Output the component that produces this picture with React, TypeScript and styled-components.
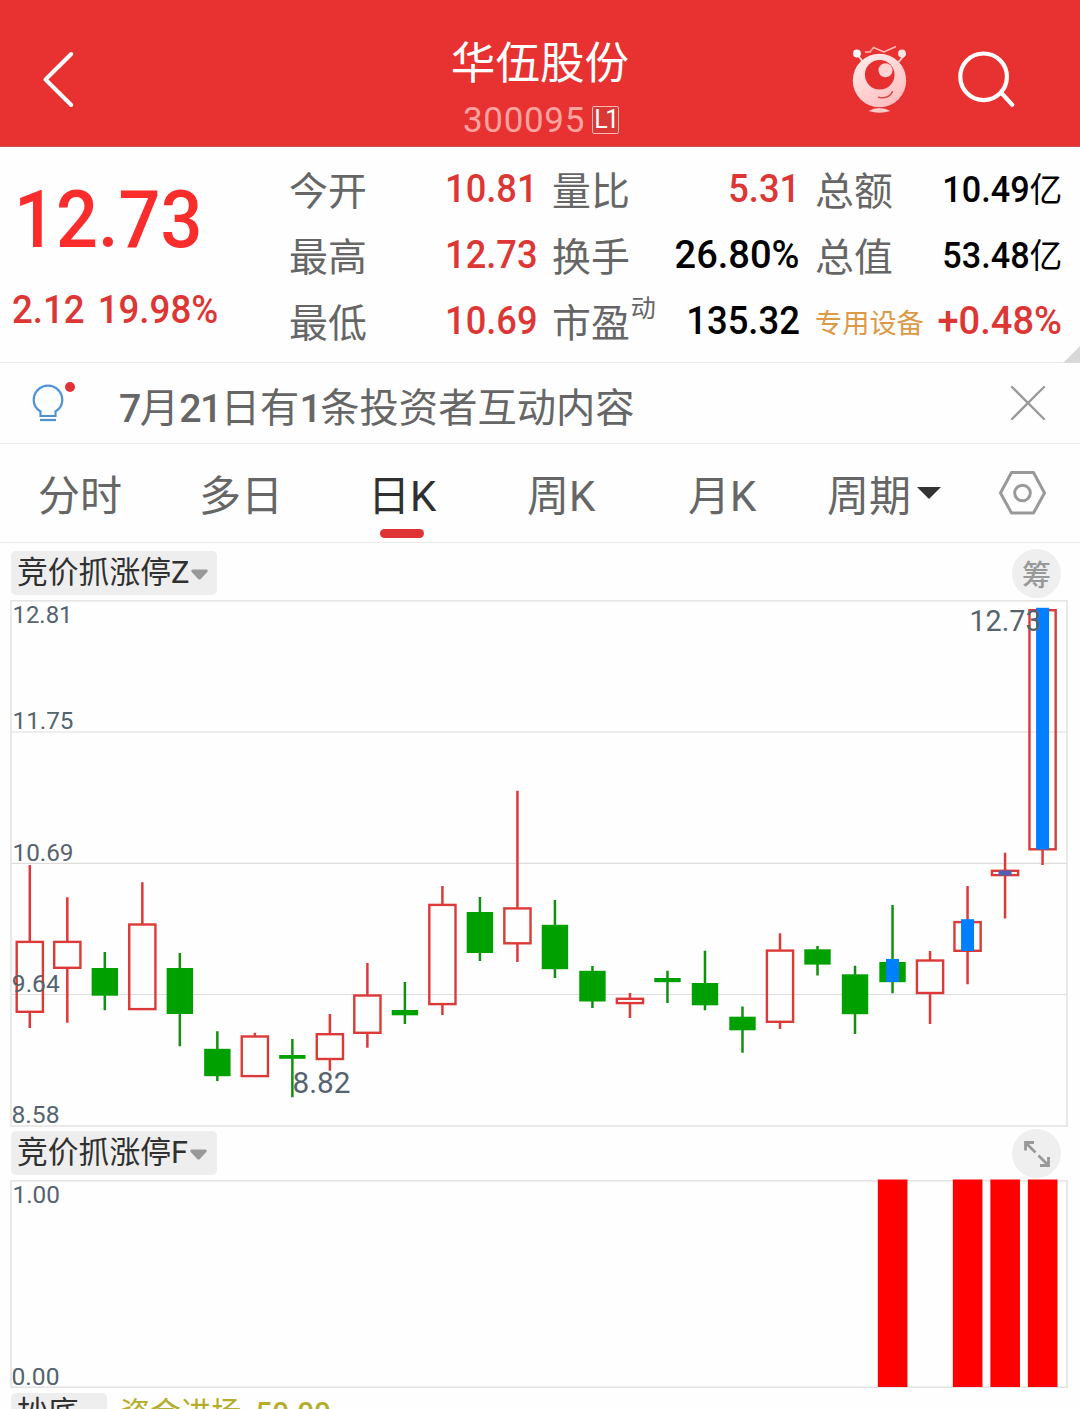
import React from 'react';
import styled, { createGlobalStyle } from 'styled-components';

const cjk = '"Noto Sans CJK SC", sans-serif';
const numeric = `Roboto, ${cjk}`;

const GlobalStyle = createGlobalStyle`
  body { margin: 0; background: #fefefe; }
  * { box-sizing: border-box; }
`;

const Page = styled.main`
  width: 1080px;
  height: 1409px;
  overflow: hidden;
  display: flex;
  flex-direction: column;
  background: #fefefe;
  color: #666;
  font-family: ${cjk};
  white-space: nowrap;
`;

const Header = styled.header`
  flex: none;
  height: 147px;
  display: grid;
  grid-template-columns: 340px 400px 340px;
  background: #e83131;
  border-bottom: 1px solid #c9504c;
`;

const BackButton = styled.div`
  padding: 50px 0 0 40px;
`;

const TitleBlock = styled.div`
  display: flex;
  flex-direction: column;
  align-items: center;
  padding-top: 30px;
`;

const StockName = styled.h1`
  margin: 0;
  height: 64px;
  line-height: 60px;
  font-size: 44.6px;
  font-weight: 400;
  color: #fff;
`;

const CodeRow = styled.div`
  display: flex;
  align-items: center;
  gap: 7px;
  height: 54px;
  padding-left: 2px;
`;

const Code = styled.span`
  font: 400 35px/54px ${numeric};
  letter-spacing: 0.65px;
  color: #ffa3a0;
`;

const LevelTag = styled.span`
  width: 27px;
  height: 28px;
  border: 1px solid #ffb5b2;
  border-radius: 2px;
  background: #d93836;
  color: #fff;
  font: 400 25px/26px ${numeric};
  letter-spacing: -2.5px;
  text-align: center;
  margin-top: -2px;
`;

const HeaderActions = styled.div`
  display: flex;
  gap: 45px;
  padding: 40px 0 0 108px;
`;

const Quote = styled.section`
  flex: none;
  height: 216px;
  display: flex;
  border-bottom: 1.5px solid #ebebeb;
  position: relative;
`;

const PriceBlock = styled.div`
  width: 289px;
`;

const Num = styled.span<{ $size: number; $scale?: number; $color?: string; $origin?: string; $weight?: number }>`
  display: inline-block;
  font-family: ${numeric};
  font-weight: ${p => p.$weight ?? 500};
  font-size: ${p => p.$size}px;
  color: ${p => p.$color ?? '#000'};
  transform: scaleX(${p => p.$scale ?? 1});
  transform-origin: ${p => p.$origin ?? 'right'} center;
`;

const Amount = styled(Num)`
  margin-top: -2px;
`;

const Unit = styled.span`
  font-family: ${cjk};
  font-size: 34.5px;
  font-weight: 400;
`;

const Price = styled.div`
  padding: 24px 0 0 14px;
  height: 120px;
  line-height: 97px;
`;

const Change = styled.div`
  padding-left: 12px;
  height: 86px;
  line-height: 87px;
  word-spacing: 4px;
`;

const Stats = styled.div`
  display: grid;
  grid-template-columns: 248px 248px 247px;
  grid-template-rows: repeat(3, 66px);
  column-gap: 15px;
  padding-top: 9px;
`;

const Stat = styled.div`
  display: flex;
  justify-content: space-between;
  line-height: 66px;
`;

const Label = styled.span<{ $sector?: boolean }>`
  margin-top: ${p => (p.$sector ? 0 : -1)}px;
  font-size: ${p => (p.$sector ? 27.2 : 38.9)}px;
  color: ${p => (p.$sector ? '#dc9a48' : '#666')};
`;

const Sup = styled.sup`
  font-size: 25px;
  line-height: 0;
  vertical-align: 20px;
  margin-left: 1px;
`;

const Corner = styled.i`
  position: absolute;
  right: 0;
  bottom: -1px;
  width: 17px;
  height: 17px;
  background: #d8d8d8;
  clip-path: polygon(100% 0, 100% 100%, 0 100%);
`;

const Notice = styled.section`
  flex: none;
  height: 81px;
  display: flex;
  align-items: flex-start;
  border-bottom: 1.5px solid #ebebeb;
  padding: 0 30px 0 28px;
`;

const NoticeText = styled.p`
  flex: 1;
  margin: 0;
  padding-left: 39px;
  line-height: 84px;
  font-size: 39.3px;
`;

const NoticeDigits = styled.span`
  font-family: ${numeric};
  font-weight: 500;
  letter-spacing: -1.5px;
`;

const BulbSlot = styled.div`
  width: 52px;
  padding-top: 14px;
`;

const CloseSlot = styled.div`
  padding-top: 20px;
`;

const Tabs = styled.nav`
  flex: none;
  height: 99px;
  display: flex;
  border-bottom: 1.5px solid #ebebeb;
  padding-left: 38px;
`;

const Tab = styled.div<{ $active?: boolean; $width: number }>`
  width: ${p => p.$width}px;
  display: flex;
  font-family: ${numeric};
  font-size: 42px;
  line-height: 105px;
  color: ${p => (p.$active ? '#303030' : '#666')};
  position: relative;
  &::after {
    content: '';
    display: ${p => (p.$active ? 'block' : 'none')};
    position: absolute;
    left: 12px;
    top: 85px;
    width: 44px;
    height: 9px;
    border-radius: 5px;
    background: #e03335;
  }
`;

const TabCaret = styled.i`
  width: 24px;
  height: 12px;
  margin: 43px 0 0 6px;
  background: #333;
  clip-path: polygon(0 0, 100% 0, 50% 100%);
`;

const GearSlot = styled.div`
  padding-top: 24px;
`;

const PanelHead = styled.div<{ $height: number; $top: number }>`
  flex: none;
  height: ${p => p.$height}px;
  padding: ${p => p.$top}px 19px 0 11px;
  display: flex;
  justify-content: space-between;
  align-items: flex-start;
`;

const Picker = styled.div<{ $width?: number; $line?: number }>`
  display: flex;
  width: ${p => p.$width ?? 206}px;
  height: 44px;
  border-radius: 5px;
  background: #eee;
  padding-left: 6px;
  font-family: ${numeric};
  font-size: 30.8px;
  line-height: ${p => p.$line ?? 44}px;
  color: #303030;
`;

const PickerCaret = styled.svg`
  margin: 18px 0 0 2px;
`;

const RoundButton = styled.div<{ $shift: number }>`
  width: 49px;
  height: 49px;
  margin-top: ${p => p.$shift}px;
  border-radius: 50%;
  background: #efefef;
  color: #999;
  font-size: 29px;
  font-weight: 500;
  line-height: 49px;
  display: flex;
  align-items: center;
  justify-content: center;
`;

const Plot = styled.svg`
  display: block;
  flex: none;
`;

const AxisText = styled.text`
  font-family: ${numeric};
  font-weight: 450;
  fill: #55636e;
`;

const IndicatorHead = styled.div`
  display: flex;
  gap: 13px;
  height: 16px;
  overflow: hidden;
`;

const Indicator = styled.div`
  display: flex;
  gap: 14px;
  font: 400 30.4px/41px ${numeric};
  color: #b5ae2c;
`;

const IndicatorValue = styled.span`
  font-weight: 500;
  font-size: 29.5px;
`;

type Candle = [up: boolean, high: number, top: number, bottom: number, low: number, mark?: [number, number]];

const candles: Candle[] = [
  [true, 865, 940.7, 1013, 1028],
  [true, 897.3, 940.7, 969, 1022.7],
  [false, 952, 968, 995.7, 1010.3],
  [true, 882.3, 923.3, 1010.3, 1010],
  [false, 953, 968, 1014, 1046.3],
  [false, 1031.3, 1048.8, 1076.2, 1080.9],
  [true, 1032.7, 1035.3, 1077.3, 1077],
  [false, 1039, 1055, 1058.8, 1097.3],
  [true, 1014, 1033, 1060.2, 1070.7],
  [true, 963, 994.3, 1034, 1047.7],
  [false, 982, 1010, 1015.3, 1024],
  [true, 886, 903.7, 1005.3, 1015],
  [false, 897, 912, 953, 960.9],
  [true, 790.7, 907.2, 944.5, 962],
  [false, 900, 924.8, 969.2, 978],
  [false, 965.9, 970.8, 1001.5, 1007.9],
  [true, 993, 997.6, 1004.3, 1017.9],
  [false, 970.7, 978, 982.2, 1002.9],
  [false, 950.7, 983, 1005.3, 1010.3],
  [false, 1006.6, 1016.7, 1030.3, 1052.7],
  [true, 933.3, 949.4, 1023, 1029],
  [false, 946, 949.3, 964.6, 975.5],
  [false, 965.7, 974.3, 1014.2, 1034],
  [false, 905, 962, 982.2, 993.2, [959, 982]],
  [true, 951, 959.3, 994.2, 1023.9],
  [true, 886, 920.9, 952, 984.2, [919.2, 951]],
  [true, 852.7, 869.6, 876.3, 918.5, [870.5, 875.5]],
  [true, 608.5, 609, 850.5, 865, [607.8, 849.5]],
];

const RED = '#dc3a38';
const GREEN = '#00a000';
const FRAME = '#e4e4e4';

function CandleShape({ index, data }: { index: number; data: Candle }) {
  const [up, high, top, bottom, low, mark] = data;
  const x = 29.8 + index * 37.51;
  return (
    <g>
      <path
        d={`M${x} ${high}V${up ? top + 1 : low}M${x} ${bottom - 1}V${Math.max(low, bottom - 1)}`}
        stroke={up ? RED : '#128f12'}
        strokeWidth="2.5"
      />
      {up ? (
        <rect x={x - 13.1} y={top + 1.2} width="26.2" height={bottom - top - 2.4} fill="none" stroke={RED} strokeWidth="2.4" />
      ) : (
        <rect x={x - 13.2} y={top} width="26.4" height={bottom - top} fill={GREEN} />
      )}
      {mark && (
        <rect x={x - 6.5} y={mark[0]} width="13" height={mark[1] - mark[0]} fill={index === 26 ? '#5260b4' : '#007fff'} />
      )}
    </g>
  );
}

const priceLabels: [string, number, number, number][] = [
  ['12.81', 12.5, 622.8, 60],
  ['11.75', 12.5, 728.6, 61],
  ['10.69', 12.5, 860.6, 61],
  ['9.64', 11.8, 991.8, 48],
  ['8.58', 11.5, 1122.6, 48],
];

function Caret() {
  return (
    <PickerCaret width="17" height="12" viewBox="0 0 17 12">
      <path d="M1.500 0.500h14q2 .4 .8 2.500L9.800 10q-1.300 1.200-2.600 0L.7 3Q-.5 .9 1.500 .5z" fill="#999" />
    </PickerCaret>
  );
}

export default function App() {
  return (
    <Page>
      <GlobalStyle />
      <Header>
        <BackButton>
          <svg width="36" height="60" viewBox="0 0 36 60" fill="none" stroke="#fff" strokeWidth="4" strokeLinecap="round" strokeLinejoin="round">
            <path d="M31.2 4L5.5 29.5 31.2 55" />
          </svg>
        </BackButton>
        <TitleBlock>
          <StockName>华伍股份</StockName>
          <CodeRow>
            <Code>300095</Code>
            <LevelTag>L1</LevelTag>
          </CodeRow>
        </TitleBlock>
        <HeaderActions>
          <svg width="62" height="76" viewBox="0 0 62 76" fill="none">
            <defs>
              <linearGradient id="mascot" x1="0" y1="0" x2="0.6" y2="1">
                <stop offset="0" stopColor="#fff0ef" />
                <stop offset="1" stopColor="#ffbfc0" />
              </linearGradient>
            </defs>
            <path d="M9 14l6 8M57.500 14l-7 8" stroke="#ffdedd" strokeWidth="1.8" />
            <circle cx="9" cy="13.500" r="3.900" fill="#fff" />
            <circle cx="54" cy="13.500" r="3.900" fill="#ffe6e5" />
            <path d="M17 12h5l3.500-4.500L36 12l12-5.500" stroke="#ffb9b7" strokeWidth="1.5" />
            <circle cx="31.500" cy="40.500" r="26.700" fill="url(#mascot)" />
            <circle cx="31.700" cy="34.800" r="14.800" fill="#e63030" />
            <circle cx="37.500" cy="30.200" r="7" fill="#ffd3d2" />
            <path d="M30.500 57.200q10 2.500 14-5.500" stroke="#d84a4a" strokeWidth="1.5" strokeLinecap="round" />
            <path d="M20.500 71q11-6 22 0-11 3.500-22 0z" fill="#ffc9c8" />
          </svg>
          <svg width="66" height="72" viewBox="0 0 66 72" fill="none" stroke="#fff" strokeWidth="4.200" strokeLinecap="round">
            <circle cx="28.600" cy="36.800" r="23.300" />
            <path d="M46 52.500L57.300 64.800" />
          </svg>
        </HeaderActions>
      </Header>

      <Quote>
        <PriceBlock>
          <Price>
            <Num $size={80.5} $scale={0.918} $color="#fa2c2c" $origin="left">12.73</Num>
          </Price>
          <Change>
            <Num $size={38} $scale={0.965} $color="#dd3735" $origin="left">2.12 19.98%</Num>
          </Change>
        </PriceBlock>
        <Stats>
          <Stat><Label>今开</Label><Num $size={39.4} $scale={0.92} $color="#dd3735">10.81</Num></Stat>
          <Stat><Label>量比</Label><Num $size={39.4} $scale={0.92} $color="#dd3735">5.31</Num></Stat>
          <Stat><Label>总额</Label><Amount $size={36} $scale={0.95}>10.49<Unit>亿</Unit></Amount></Stat>
          <Stat><Label>最高</Label><Num $size={39.4} $scale={0.92} $color="#dd3735">12.73</Num></Stat>
          <Stat><Label>换手</Label><Num $size={39.4} $scale={0.965}>26.80%</Num></Stat>
          <Stat><Label>总值</Label><Amount $size={36} $scale={0.95}>53.48<Unit>亿</Unit></Amount></Stat>
          <Stat><Label>最低</Label><Num $size={39.4} $scale={0.92} $color="#dd3735">10.69</Num></Stat>
          <Stat><Label>市盈<Sup>动</Sup></Label><Num $size={39.4} $scale={0.925}>135.32</Num></Stat>
          <Stat><Label $sector>专用设备</Label><Num $size={39.4} $scale={0.965} $color="#dd3735">+0.48%</Num></Stat>
        </Stats>
        <Corner />
      </Quote>

      <Notice>
        <BulbSlot>
          <svg width="52" height="50" viewBox="0 0 52 50" fill="none" stroke="#4f93d6" strokeWidth="2.200">
            <path d="M12.500 39v-4.500C7.500 31.500 5.700 27.500 5.700 23a14.300 14.300 0 0 1 28.600 0c0 4.500-1.800 8.500-6.800 11.500v4.500z" />
            <path d="M12 43h16" />
            <circle cx="42" cy="10" r="5" fill="#e03335" stroke="none" />
          </svg>
        </BulbSlot>
        <NoticeText>
          <NoticeDigits>7</NoticeDigits>月<NoticeDigits>21</NoticeDigits>日有<NoticeDigits>1</NoticeDigits>条投资者互动内容
        </NoticeText>
        <CloseSlot>
          <svg width="42" height="42" viewBox="0 0 42 42" stroke="#999" strokeWidth="2.300" strokeLinecap="round">
            <path d="M4 4l32 32M36 4l-32 32" />
          </svg>
        </CloseSlot>
      </Notice>

      <Tabs>
        <Tab $width={161}>分时</Tab>
        <Tab $width={169}>多日</Tab>
        <Tab $width={159} $active>日K</Tab>
        <Tab $width={161}>周K</Tab>
        <Tab $width={139}>月K</Tab>
        <Tab $width={171}>周期<TabCaret /></Tab>
        <GearSlot>
          <svg width="50" height="48" viewBox="0 0 50 48" fill="none" stroke="#999" strokeWidth="3" strokeLinejoin="round">
            <path d="M13.500 4.500h22L46.500 25l-11 20h-22L2.500 25z" />
            <circle cx="24.500" cy="25" r="7.800" />
          </svg>
        </GearSlot>
      </Tabs>

      <PanelHead $height={56} $top={8}>
        <Picker>竞价抓涨停Z<Caret /></Picker>
        <RoundButton $shift={-2}>筹</RoundButton>
      </PanelHead>

      <Plot width="1080" height="529" viewBox="0 599 1080 529">
        <path d="M11 732H1067M11 863.400H1067M11 994.500H1067" stroke="#dedede" strokeWidth="1.200" />
        <rect x="11" y="600.800" width="1056" height="525.200" fill="none" stroke={FRAME} strokeWidth="1.600" />
        {candles.map((c, i) => <CandleShape key={i} index={i} data={c} />)}
        {priceLabels.map(([label, x, y, w]) => (
          <AxisText key={label} x={x} y={y} fontSize="24.600" textLength={w} lengthAdjust="spacingAndGlyphs">{label}</AxisText>
        ))}
        <AxisText x="292.500" y="1092.500" fontSize="29" textLength="58" lengthAdjust="spacingAndGlyphs">8.82</AxisText>
        <AxisText x="969.500" y="630.600" fontSize="29" textLength="72" lengthAdjust="spacingAndGlyphs">12.73</AxisText>
      </Plot>

      <PanelHead $height={51} $top={3}>
        <Picker>竞价抓涨停F<Caret /></Picker>
        <RoundButton $shift={-2}>
          <svg width="30" height="30" viewBox="0 0 30 30" fill="none" stroke="#999" strokeWidth="2.800">
            <path d="M3.500 11.500V3.500H12M4 4l9.500 9.500M26.500 18v8.500H18M26 26l-9.500-9.500" />
          </svg>
        </RoundButton>
      </PanelHead>

      <Plot width="1080" height="214" viewBox="0 1179 1080 214">
        <rect x="11" y="1180.800" width="1056" height="206.400" fill="none" stroke={FRAME} strokeWidth="1.600" />
        {[23, 25, 26, 27].map(i => (
          <rect key={i} x={15.1 + i * 37.51} y="1179.500" width="29.600" height="207.500" fill="#ff0000" />
        ))}
        <AxisText x="12.500" y="1202.600" fontSize="24.600" textLength="47.500" lengthAdjust="spacingAndGlyphs">1.00</AxisText>
        <AxisText x="11.500" y="1384.600" fontSize="24.600" textLength="48" lengthAdjust="spacingAndGlyphs">0.00</AxisText>
      </Plot>

      <PanelHead $height={16} $top={0}>
        <IndicatorHead>
          <Picker $width={96} $line={40}>抄底</Picker>
          <Indicator><span>资金进场</span><IndicatorValue>50.00</IndicatorValue></Indicator>
        </IndicatorHead>
      </PanelHead>
    </Page>
  );
}
